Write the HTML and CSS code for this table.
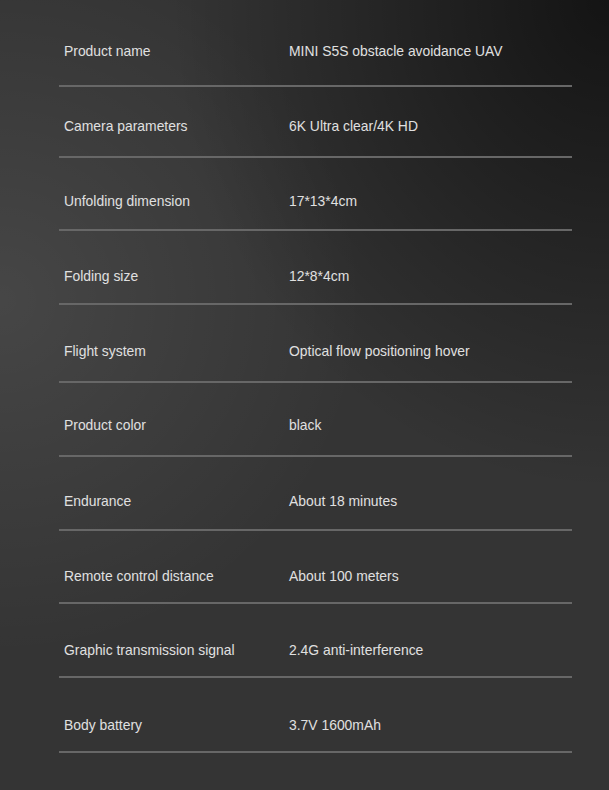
FILE: index.html
```html
<!DOCTYPE html>
<html lang="en">
<head>
<meta charset="utf-8">
<title>Specifications</title>
<link rel="stylesheet" href="styles.css">
</head>
<body>
<main class="page">
  <div class="specs">
    <div class="row"><span class="label">Product name</span><span class="value">MINI S5S obstacle avoidance UAV</span></div>
    <div class="row"><span class="label">Camera parameters</span><span class="value">6K Ultra clear/4K HD</span></div>
    <div class="row"><span class="label">Unfolding dimension</span><span class="value">17*13*4cm</span></div>
    <div class="row"><span class="label">Folding size</span><span class="value">12*8*4cm</span></div>
    <div class="row"><span class="label">Flight system</span><span class="value">Optical flow positioning hover</span></div>
    <div class="row"><span class="label">Product color</span><span class="value">black</span></div>
    <div class="row"><span class="label">Endurance</span><span class="value">About 18 minutes</span></div>
    <div class="row"><span class="label">Remote control distance</span><span class="value">About 100 meters</span></div>
    <div class="row"><span class="label">Graphic transmission signal</span><span class="value">2.4G anti-interference</span></div>
    <div class="row"><span class="label">Body battery</span><span class="value">3.7V 1600mAh</span></div>
  </div>
</main>
</body>
</html>
```
FILE: styles.css
```css
html, body {
  margin: 0;
  padding: 0;
}
body {
  width: 609px;
  height: 790px;
  overflow: hidden;
  font-family: "Liberation Sans", Arial, sans-serif;
  background-color: #343434;
  background-image:
    radial-gradient(ellipse 72% 62% at 100% 0%, rgba(0,0,0,0.62), rgba(0,0,0,0.28) 55%, rgba(0,0,0,0) 100%),
    radial-gradient(ellipse 60% 45% at 0% 38%, rgba(255,255,255,0.09), rgba(255,255,255,0) 100%);
}
.page {
  height: 790px;
}
.specs {
  margin-left: 59px;
  width: 513px;
}
.row {
  display: grid;
  grid-template-columns: 225px 1fr;
  padding: 34px 0 18px 5px;
  border-bottom: 2px solid #676767;
  font-size: 13.9px;
  line-height: 20px;
  color: #e0e0e0;
}
.row:nth-child(1) { padding-top: 41px; padding-bottom: 24px; }
.row:nth-child(2) { padding-top: 29px; padding-bottom: 20px; }
.row:nth-child(3) { padding-top: 33px; padding-bottom: 18px; }
.row:nth-child(4) { padding-top: 35px; padding-bottom: 17px; }
.row:nth-child(5) { padding-top: 36px; padding-bottom: 20px; }
.row:nth-child(6) { padding-top: 32px; padding-bottom: 20px; }
.row:nth-child(7) { padding-top: 34px; padding-bottom: 18px; }
.row:nth-child(8) { padding-top: 35px; padding-bottom: 16px; }
.row:nth-child(9) { padding-top: 36px; padding-bottom: 16px; }
.row:nth-child(10) { padding-top: 37px; padding-bottom: 16px; }
.label, .value {
  white-space: nowrap;
}
```
